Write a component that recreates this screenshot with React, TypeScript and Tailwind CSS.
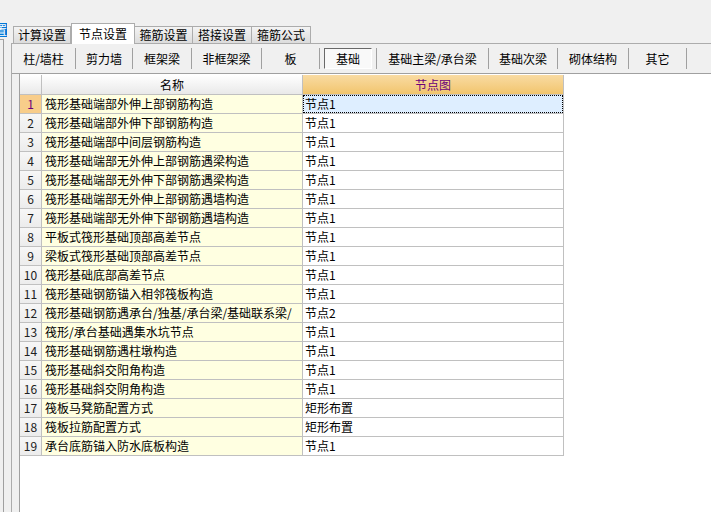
import React from "react";

const rows: [string, string][] = [
  ["筏形基础端部外伸上部钢筋构造", "节点1"],
  ["筏形基础端部外伸下部钢筋构造", "节点1"],
  ["筏形基础端部中间层钢筋构造", "节点1"],
  ["筏形基础端部无外伸上部钢筋遇梁构造", "节点1"],
  ["筏形基础端部无外伸下部钢筋遇梁构造", "节点1"],
  ["筏形基础端部无外伸上部钢筋遇墙构造", "节点1"],
  ["筏形基础端部无外伸下部钢筋遇墙构造", "节点1"],
  ["平板式筏形基础顶部高差节点", "节点1"],
  ["梁板式筏形基础顶部高差节点", "节点1"],
  ["筏形基础底部高差节点", "节点1"],
  ["筏形基础钢筋锚入相邻筏板构造", "节点1"],
  ["筏形基础钢筋遇承台/独基/承台梁/基础联系梁/", "节点2"],
  ["筏形/承台基础遇集水坑节点", "节点1"],
  ["筏形基础钢筋遇柱墩构造", "节点1"],
  ["筏形基础斜交阳角构造", "节点1"],
  ["筏形基础斜交阴角构造", "节点1"],
  ["筏板马凳筋配置方式", "矩形布置"],
  ["筏板拉筋配置方式", "矩形布置"],
  ["承台底筋锚入防水底板构造", "节点1"],
];

const subTabs: { label: string; w: string }[] = [
  { label: "柱/墙柱", w: "w-[64px]" },
  { label: "剪力墙", w: "w-[57px]" },
  { label: "框架梁", w: "w-[59px]" },
  { label: "非框架梁", w: "w-[70px]" },
  { label: "板", w: "w-[58px]" },
  { label: "基础", w: "w-[57px]" },
  { label: "基础主梁/承台梁", w: "w-[112px]" },
  { label: "基础次梁", w: "w-[69px]" },
  { label: "砌体结构", w: "w-[71px]" },
  { label: "其它", w: "w-[58px]" },
];

export default function App() {
  return (
    <div className="w-[711px] h-[512px] overflow-hidden bg-[#f0f0f0] flex text-[12px] text-black font-['SimSun','Noto_Sans_CJK_SC',sans-serif]">
      {/* left sidebar sliver */}
      <div className="w-[11px] shrink-0 flex flex-col">
        <div className="h-[23px]" />
        <div className="h-[14px] w-[7px] bg-[#0078d7] overflow-hidden flex justify-end items-center text-white leading-[14px]">
          <span className="shrink-0">置</span>
        </div>
        <div className="h-[2px]" />
        <div className="flex-1 w-[4px] border-t border-r border-[#a0a0a0]" />
      </div>

      {/* tab control */}
      <div className="flex-1 flex flex-col min-w-0">
        <div className="h-[23px] shrink-0" />
        <div className="h-[20px] shrink-0 flex items-end pl-[2px] relative z-10">
          <div className="w-[58px] h-[17px] border border-b-0 border-[#acacac] bg-gradient-to-b from-[#f4f4f4] to-[#dcdcdc] flex items-center justify-center leading-[16px]">
            计算设置
          </div>
          <div className="w-[64px] h-[21px] -mb-[1px] border border-b-0 border-[#acacac] bg-[#ffffff] flex items-start justify-center pt-[2px] leading-[16px]">
            节点设置
          </div>
          <div className="w-[58px] h-[17px] border border-b-0 border-l-0 border-[#acacac] bg-gradient-to-b from-[#f4f4f4] to-[#dcdcdc] flex items-center justify-center leading-[16px]">
            箍筋设置
          </div>
          <div className="w-[59px] h-[17px] border border-b-0 border-l-0 border-[#acacac] bg-gradient-to-b from-[#f4f4f4] to-[#dcdcdc] flex items-center justify-center leading-[16px]">
            搭接设置
          </div>
          <div className="w-[59px] h-[17px] border border-b-0 border-l-0 border-[#acacac] bg-gradient-to-b from-[#f4f4f4] to-[#dcdcdc] flex items-center justify-center leading-[16px]">
            箍筋公式
          </div>
        </div>

        <div className="flex-1 flex flex-col border-t border-l border-[#acacac] min-h-0">
          {/* sub-tab row */}
          <div className="h-[30px] shrink-0 flex items-center border-b border-[#a0a0a0]">
            {subTabs.map((t) => (
              <div
                key={t.label}
                className={`${t.w} h-[21px] shrink-0 flex items-center justify-center border-r border-[#a0a0a0]`}
              >
                {t.label === "基础" ? (
                  <div className="w-[48px] h-[21px] border border-t-[#696969] border-l-[#696969] border-r-white border-b-white bg-[#f9f9f9] flex items-center justify-center leading-[16px]">
                    基础
                  </div>
                ) : (
                  <span className="leading-[16px] whitespace-nowrap">{t.label}</span>
                )}
              </div>
            ))}
          </div>

          {/* grid area */}
          <div className="flex-1 flex min-h-0">
            <div className="w-[7px] shrink-0" />
            <div className="flex-1 bg-white border-l border-[#a0a0a0] pt-[1px]">
              <div className="w-[544px]">
                {/* header */}
                <div className="flex h-[20px] border-b border-[#c0c0c0]">
                  <div className="w-[22px] border-r border-[#c0c0c0] bg-gradient-to-b from-[#ffffff] to-[#e9e9e9]" />
                  <div className="w-[261px] border-r border-[#c0c0c0] bg-gradient-to-b from-[#ffffff] to-[#e9e9e9] flex items-center justify-center leading-[16px]">
                    名称
                  </div>
                  <div className="w-[261px] border-r border-[#c0c0c0] bg-gradient-to-b from-[#f9dba2] to-[#f1c56d] flex items-center justify-center text-[#6b007a] leading-[16px]">
                    节点图
                  </div>
                </div>
                {rows.map(([name, node], i) => (
                  <div key={i} className="flex h-[19px] border-b border-[#c0c0c0]">
                    <div
                      className={`w-[22px] shrink-0 border-r border-[#c0c0c0] flex items-center justify-center leading-[16px] ${
                        i === 0
                          ? "bg-[#f8cd8a] text-[#6b007a]"
                          : "bg-gradient-to-b from-[#f7f7f7] to-[#ececec] text-[#202020]"
                      }`}
                    >
                      {i + 1}
                    </div>
                    <div className="w-[261px] shrink-0 border-r border-[#c0c0c0] bg-[#ffffe1] flex items-center pl-[3px] overflow-hidden whitespace-nowrap leading-[16px]">
                      {name}
                    </div>
                    <div className="w-[261px] shrink-0 border-r border-[#c0c0c0] flex items-stretch">
                      {i === 0 ? (
                        <div className="flex-1 bg-[#deeeff] border border-dotted border-black flex items-center pl-[1px] leading-[16px]">
                          {node}
                        </div>
                      ) : (
                        <div className="flex-1 flex items-center pl-[2px] leading-[16px]">{node}</div>
                      )}
                    </div>
                  </div>
                ))}
              </div>
            </div>
          </div>
        </div>
      </div>
    </div>
  );
}
